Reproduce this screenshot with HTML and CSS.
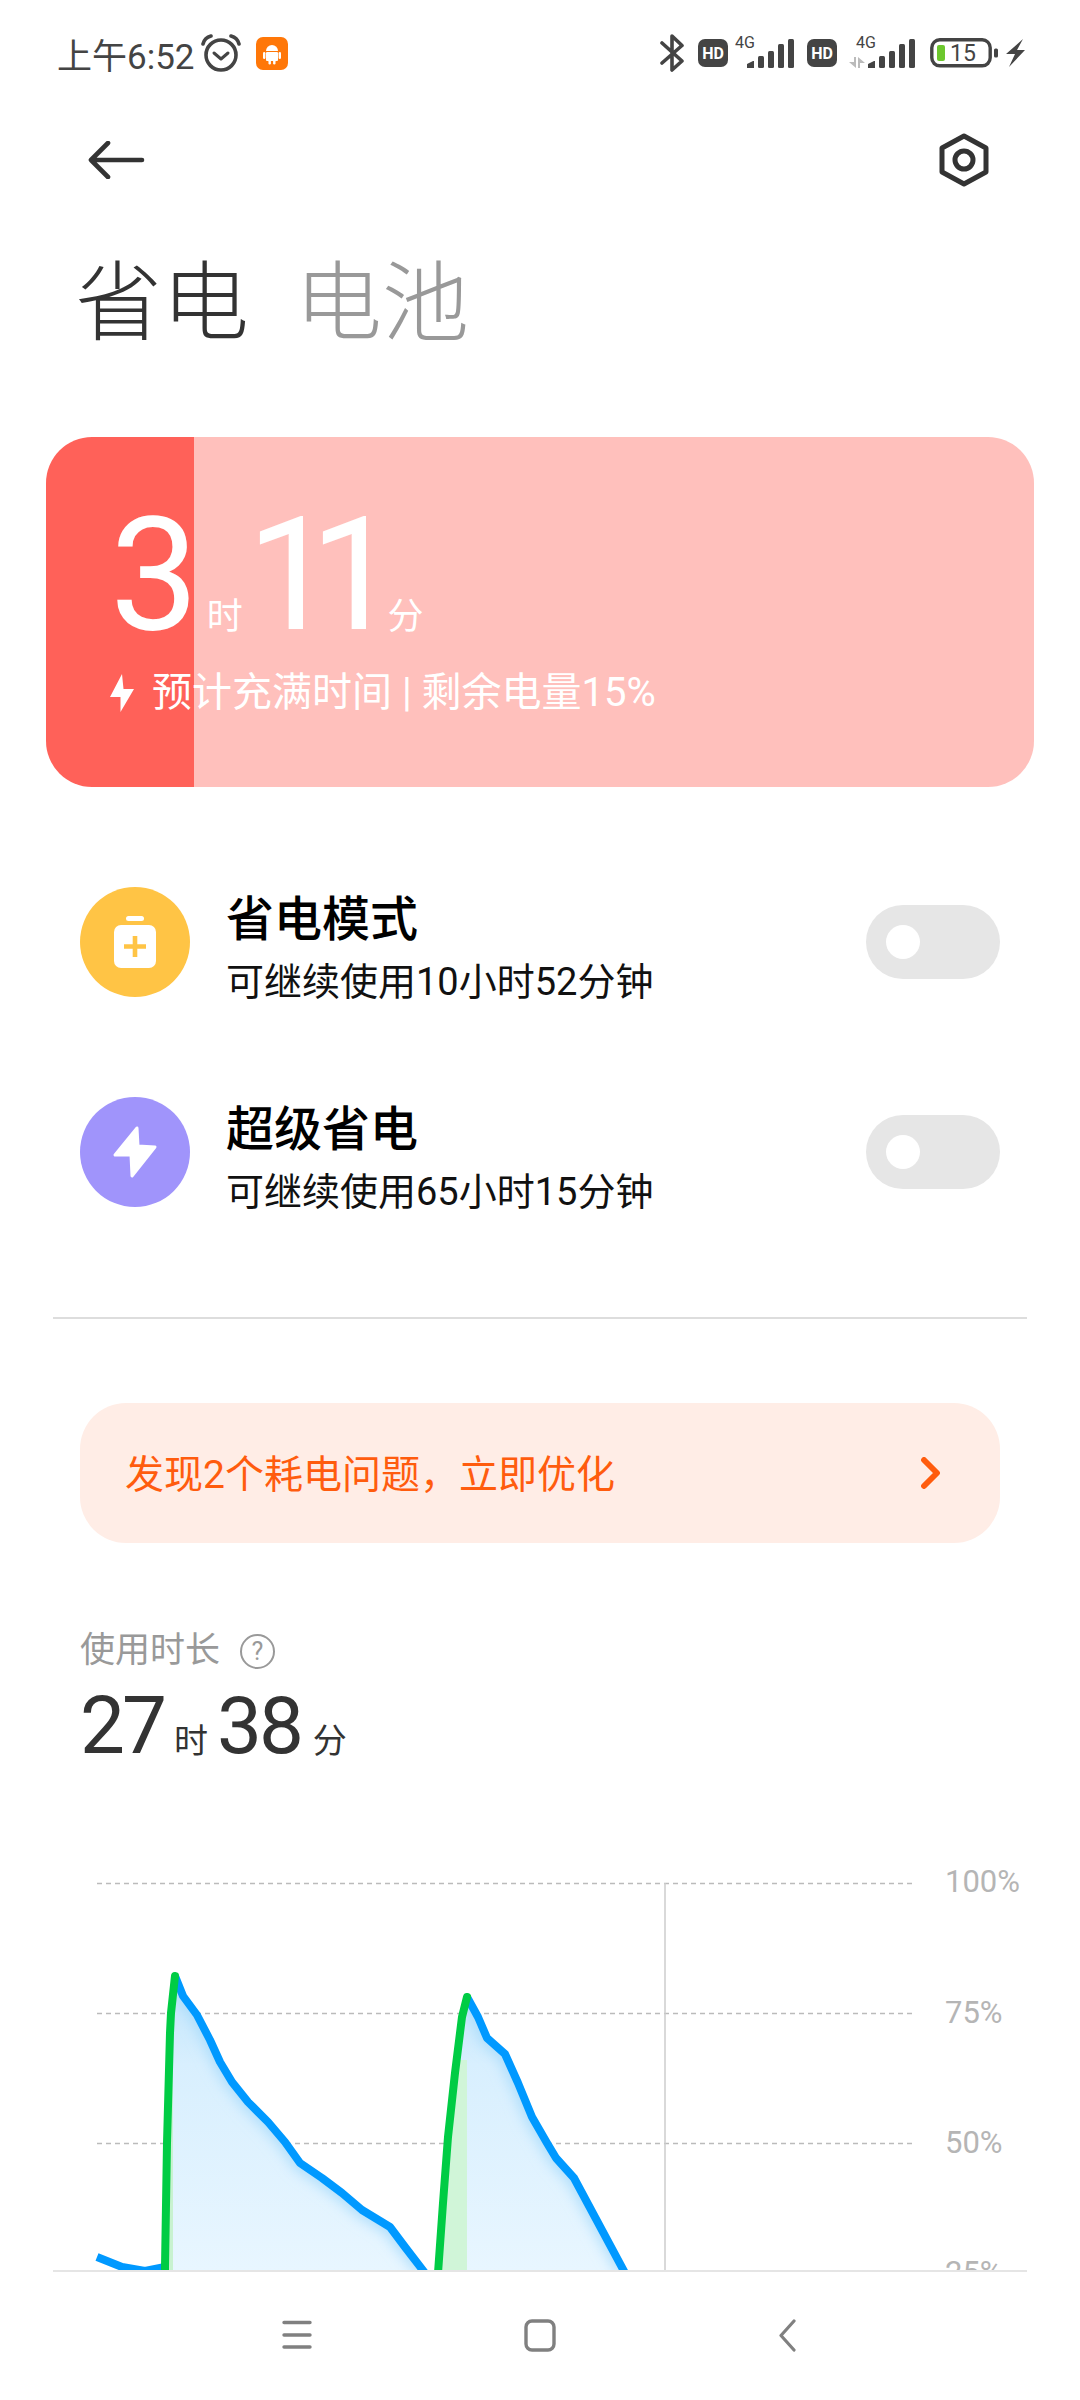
FILE: index.html
```html
<!DOCTYPE html>
<html lang="zh-CN">
<head>
  <meta charset="UTF-8" />
  <title>省电</title>
  <link rel="stylesheet" href="styles.css">
</head>
<body>
  <div class="page">
    <!-- status bar -->
    <div class="status">
      <div class="status-left">
        <span class="clock">上午6:52</span>
        <svg class="alarm" width="40" height="38" viewBox="0 0 40 38" fill="none" stroke="#444" stroke-width="3.6" stroke-linecap="round" stroke-linejoin="round">
          <circle cx="20" cy="21" r="15" />
          <path d="M13 19l7 6 7-6" stroke-width="3" />
          <path d="M2 10C3 6 6 3 10 2M38 10C37 6 34 3 30 2" />
        </svg>
        <svg class="app-badge" width="32" height="33" viewBox="0 0 32 33">
          <rect width="32" height="33" rx="7" fill="#ff7708" />
          <path d="M10 14a6 6 0 0 1 12 0z" fill="#fff" />
          <rect x="10" y="15" width="12" height="9" rx="1" fill="#fff" />
          <rect x="7" y="15" width="2.400" height="7" rx="1.200" fill="#fff" />
          <rect x="22.600" y="15" width="2.400" height="7" rx="1.200" fill="#fff" />
          <rect x="12.500" y="23" width="2.400" height="4.500" rx="1.200" fill="#fff" />
          <rect x="17.100" y="23" width="2.400" height="4.500" rx="1.200" fill="#fff" />
        </svg>
      </div>
      <div class="status-right">
        <svg width="24" height="38" viewBox="0 0 24 38" fill="none" stroke="#444" stroke-width="3.6" stroke-linecap="round" stroke-linejoin="round">
          <path d="M2 9l20 18-10 9V2l10 9.500L2 29" />
        </svg>
        <span class="hd hd-first">HD</span>
        <svg class="sig-one" width="60" height="48" viewBox="0 -6 60 48" fill="#444">
          <text class="sig-text" x="0" y="13">4G</text>
          <path d="M12 33v-4l6-3h1v7z" />
          <rect x="23" y="21" width="6" height="12" rx="1.500" />
          <rect x="33" y="16" width="6" height="17" rx="1.500" />
          <rect x="43" y="9" width="6" height="24" rx="1.500" />
          <rect x="53" y="4" width="6" height="29" rx="1.500" />
        </svg>
        <span class="hd hd-second">HD</span>
        <svg class="sig-two" width="67" height="48" viewBox="0 -6 67 48" fill="#444">
          <text class="sig-text" x="7" y="13">4G</text>
          <path d="M7 22v11l-7-6h5v-5zM9 33V22l7 6h-5v5z" fill="#bbb" />
          <path d="M19 33v-4l6-3h1v7z" />
          <rect x="30" y="21" width="6" height="12" rx="1.500" />
          <rect x="40" y="16" width="6" height="17" rx="1.500" />
          <rect x="50" y="9" width="6" height="24" rx="1.500" />
          <rect x="60" y="4" width="6" height="29" rx="1.500" />
        </svg>
        <svg class="battery" width="68" height="30" viewBox="0 0 68 30">
          <rect x="1.800" y="1.800" width="58.400" height="26" rx="8" fill="none" stroke="#444" stroke-width="3.400" />
          <rect x="7" y="7" width="8" height="16" rx="2" fill="#6cc72d" />
          <text class="batt-text" x="20" y="23">15</text>
          <rect x="64" y="10.500" width="4" height="9" rx="1.500" fill="#444" />
        </svg>
        <svg class="status-bolt" width="19" height="30" viewBox="0 0 19 30" fill="#444">
          <path d="M17 1L0 16h9L3 29l16-17h-8z" />
        </svg>
      </div>
    </div>

    <!-- toolbar -->
    <div class="toolbar">
      <svg width="57" height="38" viewBox="0 0 57 38" fill="none" stroke="#333" stroke-width="4.600" stroke-linecap="round" stroke-linejoin="round">
        <path d="M54 19H3M20 2L3 19l17 17" />
      </svg>
      <svg width="50" height="54" viewBox="0 0 50 54" fill="none" stroke="#333" stroke-width="5" stroke-linejoin="round">
        <path d="M25 3l22 12v24L25 51 3 39V15z" />
        <circle cx="25" cy="27" r="9" />
      </svg>
    </div>

    <div class="tabs">
      <span class="tab tab-active">省电</span>
      <span class="tab">电池</span>
    </div>

    <!-- charge card -->
    <div class="charge-card">
      <div class="time">
        <span class="time-big time-hours">3</span>
        <span class="time-unit unit-hours">时</span>
        <span class="time-big time-mins">11</span>
        <span class="time-unit unit-mins">分</span>
      </div>
      <div class="charge-info">
        <svg width="24" height="38" viewBox="0 0 24 38" fill="#fff">
          <path d="M12 0L0 23h10.500v15L24 15H13.500z" />
        </svg>
        <span>预计充满时间 | 剩余电量15%</span>
      </div>
    </div>

    <!-- modes -->
    <div class="modes">
      <div class="mode">
        <svg class="mode-icon" width="110" height="110" viewBox="0 0 110 110">
          <circle cx="55" cy="55" r="55" fill="#ffc445" />
          <rect x="46" y="29" width="18" height="5" rx="2.500" fill="#fff" />
          <rect x="34" y="38" width="42" height="43" rx="7" fill="#fff" />
          <path d="M44 59.500h22M55 49v21" stroke="#ffc445" stroke-width="4.600" />
        </svg>
        <div class="mode-text">
          <div class="mode-title">省电模式</div>
          <div class="mode-sub">可继续使用10小时52分钟</div>
        </div>
        <div class="toggle"><div class="knob"></div></div>
      </div>
      <div class="mode">
        <svg class="mode-icon" width="110" height="110" viewBox="0 0 110 110">
          <circle cx="55" cy="55" r="55" fill="#a094fb" />
          <path d="M57 31L35 58h16l1 21 23-29-17-1z" fill="#fff" stroke="#fff" stroke-width="3" stroke-linejoin="round" />
        </svg>
        <div class="mode-text">
          <div class="mode-title">超级省电</div>
          <div class="mode-sub">可继续使用65小时15分钟</div>
        </div>
        <div class="toggle"><div class="knob"></div></div>
      </div>
    </div>

    <div class="divider"></div>

    <div class="banner">
      <span class="banner-text">发现2个耗电问题，立即优化</span>
      <svg width="20" height="32" viewBox="0 0 20 32" fill="none" stroke="#ff5c0e" stroke-width="5.800" stroke-linecap="round" stroke-linejoin="round">
        <path d="M4 3l13 13L4 29" />
      </svg>
    </div>

    <div class="usage">
      <div class="usage-label">
        <span>使用时长</span>
        <span class="help">?</span>
      </div>
      <div class="usage-value">
        <span class="usage-num">27</span>
        <span class="usage-unit">时</span>
        <span class="usage-num">38</span>
        <span class="usage-unit">分</span>
      </div>
    </div>

    <!-- chart, coordinates are page pixels -->
    <div class="chart">
      <svg width="1080" height="410" viewBox="0 1860 1080 410">
        <defs>
          <linearGradient id="fillBlue" x1="0" y1="1976" x2="0" y2="2270" gradientUnits="userSpaceOnUse">
            <stop offset="0" stop-color="#bfe4fb" />
            <stop offset="0.3" stop-color="#d8effe" />
            <stop offset="1" stop-color="#e8f6ff" />
          </linearGradient>
          <clipPath id="clipOne">
            <path d="M175 1976L183 1996 197 2015 210 2040 220 2062 232 2082 248 2102 268 2122 285 2142 300 2163 322 2178 342 2193 362 2210 390 2227 405 2247 425 2271H165L167 2143 170 2033 171 2013z" />
          </clipPath>
          <clipPath id="clipTwo">
            <path d="M467 1997L478 2017 487 2038 505 2054 518 2083 532 2117 547 2143 556 2158 574 2178 625 2271H438L443 2203 448 2137 455 2073 462 2017z" />
          </clipPath>
          <filter id="soft" x="-20%" y="-20%" width="140%" height="140%">
            <feGaussianBlur stdDeviation="7" />
          </filter>
        </defs>

        <g class="grid-lines">
          <path d="M97 1883.500H914M97 2013.500H914M97 2143.500H914" />
        </g>
        <path d="M665 1883V2270" stroke="#ccc" stroke-width="1.500" />

        <g clip-path="url(#clipOne)">
          <rect x="160" y="1970" width="270" height="301" fill="url(#fillBlue)" />
          <rect x="165" y="2040" width="8" height="231" fill="#c8f2d0" />
          <path d="M175 1976L183 1996 197 2015 210 2040 220 2062 232 2082 248 2102 268 2122 285 2142 300 2163 322 2178 342 2193 362 2210 390 2227 405 2247 425 2271" fill="none" stroke="#a9dcfb" stroke-width="14" filter="url(#soft)" />
        </g>
        <g clip-path="url(#clipTwo)">
          <rect x="430" y="1990" width="200" height="281" fill="url(#fillBlue)" />
          <rect x="430" y="2060" width="37" height="211" fill="#d0f5d8" />
          <path d="M467 1997L478 2017 487 2038 505 2054 518 2083 532 2117 547 2143 556 2158 574 2178 625 2271" fill="none" stroke="#a9dcfb" stroke-width="14" filter="url(#soft)" />
        </g>

        <g class="line-blue">
          <path d="M97 2257L122 2267 145 2271 165 2267" />
          <path d="M175 1976L183 1996 197 2015 210 2040 220 2062 232 2082 248 2102 268 2122 285 2142 300 2163 322 2178 342 2193 362 2210 390 2227 405 2247 425 2273" />
          <path d="M467 1997L478 2017 487 2038 505 2054 518 2083 532 2117 547 2143 556 2158 574 2178 625 2273" />
        </g>
        <g class="line-green">
          <path d="M165 2273V2267L167 2143 170 2033 171 2013 175 1976" />
          <path d="M438 2273L443 2203 448 2137 455 2073 462 2017 467 1997" />
        </g>

        <text class="axis-label" x="945" y="1892">100%</text>
        <text class="axis-label" x="945" y="2023">75%</text>
        <text class="axis-label" x="945" y="2153">50%</text>
        <text class="axis-label" x="945" y="2283">25%</text>
      </svg>
    </div>

    <div class="nav-line"></div>
    <div class="nav">
      <svg width="30" height="30" viewBox="0 0 30 30" stroke="#808080" stroke-width="3.400" stroke-linecap="round">
        <path d="M2 2.500h26M2 15h26M2 27h26" />
      </svg>
      <svg class="nav-home" width="32" height="33" viewBox="0 0 32 33" fill="none" stroke="#808080" stroke-width="3.400">
        <rect x="2" y="2" width="28" height="29" rx="6" />
      </svg>
      <svg class="nav-back" width="17" height="33" viewBox="0 0 17 33" fill="none" stroke="#808080" stroke-width="3.200" stroke-linecap="round" stroke-linejoin="round">
        <path d="M15 2L2 16.500 15 31" />
      </svg>
    </div>
  </div>
</body>
</html>
```

FILE: styles.css
```css
body {
  margin: 0;
  background-color: #fff;
  font-family: Roboto, "Noto Sans CJK SC", sans-serif;
}

.page {
  width: 1080px;
  height: 2400px;
  overflow: hidden;
  display: flex;
  flex-direction: column;
}

/* status bar */
.status {
  height: 106px;
  flex-shrink: 0;
  display: flex;
  justify-content: space-between;
  align-items: center;
  padding: 0 55px 0 57px;
}

.status-left,
.status-right {
  display: flex;
  align-items: center;
}

.clock {
  font-size: 35px;
  color: #444;
}

.alarm {
  margin-left: 6px;
}

.app-badge {
  margin-left: 15px;
}

.hd {
  width: 30px;
  height: 28px;
  border-radius: 7px;
  background-color: #444;
  color: #fff;
  font-size: 16px;
  font-weight: 700;
  display: flex;
  align-items: center;
  justify-content: center;
}

.hd-first {
  margin-left: 14px;
}

.sig-one {
  margin-left: 7px;
}

.hd-second {
  margin-left: 12px;
}

.sig-two {
  margin-left: 12px;
}

.sig-text {
  font-size: 16px;
}

.battery {
  margin-left: 14px;
}

.batt-text {
  font-size: 23px;
  fill: #444;
}

.status-bolt {
  margin-left: 8px;
}

/* toolbar and tabs */
.toolbar {
  height: 108px;
  flex-shrink: 0;
  display: flex;
  justify-content: space-between;
  align-items: center;
  padding: 0 91px 0 88px;
}

.tabs {
  margin-top: 40px;
  padding-left: 75px;
  display: flex;
  gap: 46px;
  flex-shrink: 0;
}

.tab {
  font-size: 87px;
  line-height: 100px;
  font-weight: 300;
  color: #999;
}

.tab-active {
  color: #333;
}

/* charge card */
.charge-card {
  margin: 83px 46px 0;
  height: 350px;
  flex-shrink: 0;
  box-sizing: border-box;
  border-radius: 46px;
  padding-left: 64px;
  background: linear-gradient(to right, #ff6159 148px, #ffc0bc 148px);
  color: #fff;
}

.time {
  display: flex;
  align-items: baseline;
  padding-top: 53px;
}

.time-big {
  font-size: 158px;
  line-height: 170px;
}

.time-mins {
  letter-spacing: -26px;
  margin-left: 4px;
}

.time-unit {
  font-size: 36px;
}

.unit-hours {
  margin-left: 8px;
}

.unit-mins {
  margin-left: 15px;
}

.charge-info {
  display: flex;
  align-items: center;
  gap: 18px;
  font-size: 40px;
  line-height: 50px;
  margin-top: 8px;
}

/* modes */
.modes {
  margin-top: 100px;
  padding: 0 80px;
  display: flex;
  flex-direction: column;
  gap: 100px;
  flex-shrink: 0;
}

.mode {
  display: flex;
  align-items: center;
  height: 110px;
}

.mode-icon {
  flex-shrink: 0;
}

.mode-text {
  margin-left: 36px;
  padding-top: 12px;
  flex: 1;
}

.mode-title {
  font-size: 48px;
  line-height: 62px;
  font-weight: 500;
  color: #000;
}

.mode-sub {
  font-size: 38px;
  line-height: 50px;
  margin-top: 6px;
  color: #111;
}

.toggle {
  width: 134px;
  height: 74px;
  border-radius: 37px;
  background-color: #e6e6e6;
  display: flex;
  align-items: center;
  padding-left: 20px;
  box-sizing: border-box;
}

.knob {
  width: 34px;
  height: 34px;
  border-radius: 50%;
  background-color: #fff;
}

.divider {
  margin: 110px 53px 0;
  height: 2px;
  background-color: #ddd;
  flex-shrink: 0;
}

/* banner */
.banner {
  margin: 84px 80px 0;
  height: 140px;
  flex-shrink: 0;
  border-radius: 46px;
  background-color: #ffede6;
  color: #ff5c0e;
  font-size: 39px;
  display: flex;
  align-items: center;
  justify-content: space-between;
  padding: 0 60px 0 45px;
}

.banner-text {
  padding-bottom: 5px;
}

/* usage */
.usage {
  margin-top: 88px;
  padding-left: 80px;
  flex-shrink: 0;
}

.usage-label {
  display: flex;
  align-items: center;
  gap: 20px;
  font-size: 35px;
  line-height: 40px;
  color: #999;
}

.help {
  width: 31px;
  height: 31px;
  border: 2.5px solid #999;
  border-radius: 50%;
  font-size: 25px;
  line-height: 31px;
  text-align: center;
}

.usage-value {
  display: flex;
  align-items: baseline;
  color: #333;
  margin-top: 10px;
}

.usage-num {
  font-size: 80px;
  line-height: 90px;
  letter-spacing: -3px;
}

.usage-unit {
  font-size: 34px;
  margin: 0 9px 0 10px;
}

.usage-unit:last-child {
  margin-left: 12px;
}

/* chart */
.chart {
  position: absolute;
  left: 0;
  top: 1860px;
  width: 1080px;
  height: 410px;
  overflow: hidden;
}

.chart svg {
  display: block;
}

.grid-lines {
  fill: none;
  stroke: #bbb;
  stroke-width: 1.500;
  stroke-dasharray: 5 4;
}

.line-blue,
.line-green {
  fill: none;
  stroke-width: 8;
  stroke-linejoin: round;
}

.line-blue {
  stroke: #0099ff;
}

.line-green {
  stroke: #00cc44;
  stroke-linecap: round;
}

.axis-label {
  font-size: 31px;
  fill: #b5b5b5;
}

/* navigation */
.nav-line {
  position: absolute;
  top: 2270px;
  left: 53px;
  width: 974px;
  height: 2px;
  background-color: #e5e5e5;
}

.nav {
  position: absolute;
  top: 2272px;
  left: 0;
  right: 0;
  height: 126px;
  display: flex;
  align-items: center;
  padding-left: 282px;
}

.nav-home {
  margin-left: 212px;
}

.nav-back {
  margin-left: 223px;
}
```
